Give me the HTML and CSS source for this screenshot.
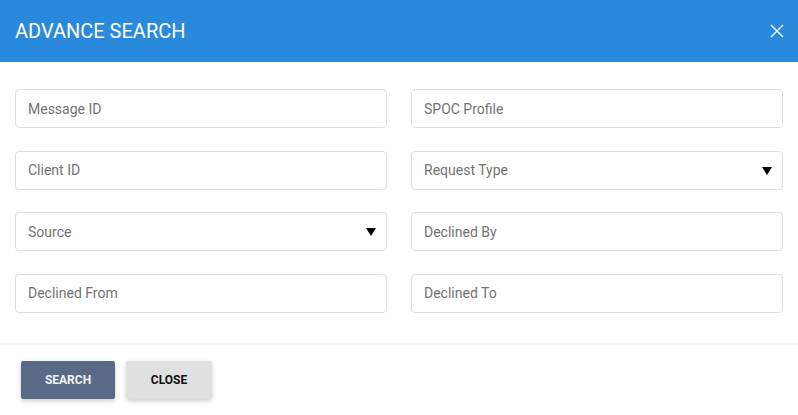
FILE: index.html
```html
<!DOCTYPE html>
<html lang="en">
  <head>
    <meta charset="UTF-8" />
    <meta name="viewport" content="width=device-width, initial-scale=1.0" />
    <title>Advance Search</title>
    <link rel="stylesheet" href="styles.css">
  </head>
  <body>
    <div id="search_modal">
      <div class="modal_header">
        <h2 class="modal_title">ADVANCE SEARCH</h2>
        <button class="modal_close" type="button" aria-label="close">
          <svg width="14" height="14" viewBox="0 0 14 14">
            <path d="M1 1 L13 13 M13 1 L1 13" stroke="#ffffff" stroke-width="1.4" fill="none" />
          </svg>
        </button>
      </div>
      <form id="search_form">
        <div class="search_fields">
          <input class="field" type="text" placeholder="Message ID" />
          <input class="field" type="text" placeholder="SPOC Profile" />
          <input class="field" type="text" placeholder="Client ID" />
          <div class="select_wrap">
            <select class="field">
              <option>Request Type</option>
            </select>
          </div>
          <div class="select_wrap">
            <select class="field">
              <option>Source</option>
            </select>
          </div>
          <input class="field" type="text" placeholder="Declined By" />
          <input class="field" type="text" placeholder="Declined From" />
          <input class="field" type="text" placeholder="Declined To" />
        </div>
        <div class="modal_footer">
          <button class="btn btn_search" type="submit">SEARCH</button>
          <button class="btn btn_close" type="button">CLOSE</button>
        </div>
      </form>
    </div>
  </body>
</html>
```

FILE: styles.css
```css
body {
  margin: 0;
  font-family: Roboto, "Liberation Sans", sans-serif;
  background: #ffffff;
}
#search_modal {
  width: 798px;
  height: 415px;
  display: flex;
  flex-direction: column;
}
.modal_header {
  height: 62px;
  flex-shrink: 0;
  background-color: #2989dd;
  display: flex;
  align-items: center;
  justify-content: space-between;
  padding: 0 13px 0 15px;
  box-sizing: border-box;
}
.modal_title {
  margin: 0;
  color: #ffffff;
  font-size: 20px;
  font-weight: 400;
}
.modal_close {
  border: none;
  background: none;
  padding: 0;
  width: 16px;
  height: 16px;
  display: flex;
  align-items: center;
  justify-content: center;
  cursor: pointer;
}
#search_form {
  flex: 1;
  display: flex;
  flex-direction: column;
}
.search_fields {
  display: grid;
  grid-template-columns: 1fr 1fr;
  column-gap: 24px;
  row-gap: 22.5px;
  padding: 27px 15px 30.5px 15px;
}
.field {
  width: 100%;
  height: 39px;
  box-sizing: border-box;
  border: 1px solid #dde0e4;
  border-radius: 4px;
  padding: 0 12px;
  font-family: Roboto, "Liberation Sans", sans-serif;
  font-size: 14px;
  color: #737373;
  background: #ffffff;
  outline: none;
}
.field::placeholder {
  color: #737373;
}
select.field {
  appearance: none;
  -webkit-appearance: none;
}
.select_wrap {
  position: relative;
}
/* dropdown arrow */
.select_wrap::after {
  content: "";
  position: absolute;
  right: 11px;
  top: 16px;
  border-left: 5px solid transparent;
  border-right: 5px solid transparent;
  border-top: 8px solid #000000;
  pointer-events: none;
}
.modal_footer {
  border-top: 2px solid #f1f1f1;
  padding: 16px 21px;
  display: flex;
  gap: 11px;
}
.btn {
  height: 38px;
  border: none;
  border-radius: 2px;
  font-family: Roboto, "Liberation Sans", sans-serif;
  font-size: 12px;
  font-weight: 700;
  cursor: pointer;
  box-shadow: 0 2px 5px rgba(0, 0, 0, 0.2);
}
.btn_search {
  width: 94px;
  background-color: #596988;
  color: #f2f2f2;
}
.btn_close {
  width: 86px;
  background-color: #e0e0e0;
  color: #111111;
}
```
